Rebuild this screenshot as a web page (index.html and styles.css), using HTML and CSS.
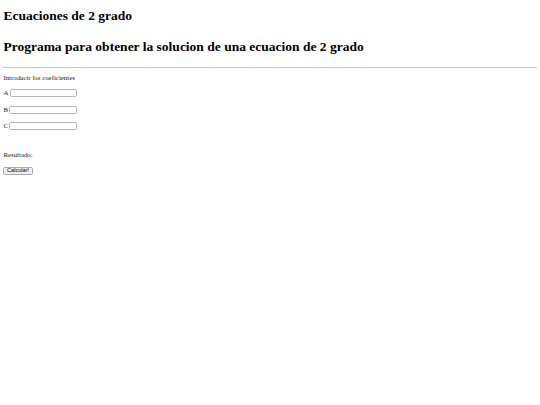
FILE: index.html
```html
<!DOCTYPE html>
<html lang="es">
<head>
<meta charset="utf-8">
<title>Ecuaciones de 2 grado</title>
<link rel="stylesheet" href="styles.css">
</head>
<body>
<div class="page">
  <h1 class="title">Ecuaciones de 2 grado</h1>
  <h1 class="title subtitle">Programa para obtener la solucion de una ecuacion de 2 grado</h1>
  <hr class="rule">
  <p class="intro">Introducir los coeficientes</p>
  <div class="row"><label class="lbl" for="a">A</label><input class="field" id="a" type="text"></div>
  <div class="row"><label class="lbl" for="b">B</label><input class="field" id="b" type="text"></div>
  <div class="row"><label class="lbl" for="c">C</label><input class="field" id="c" type="text"></div>
  <p class="result">Resultado:</p>
  <div class="actions"><button class="btn" type="button">Calcular!</button></div>
</div>
</body>
</html>
```

FILE: styles.css
```css
html, body {
  margin: 0;
  padding: 0;
  background: #ffffff;
}

.page {
  display: flex;
  flex-direction: column;
  align-items: stretch;
  padding: 8.2px 3.4px 0 3.4px;
  font-family: "Liberation Serif", "Times New Roman", serif;
  font-size: 6.85px;
  color: #1a1a1a;
}

.title {
  margin: 0;
  font-size: 13.5px;
  line-height: 15.5px;
  font-weight: bold;
  color: #000000;
}

.subtitle {
  margin-top: 15px;
}

.rule {
  margin: 13px 0 0 0;
  border: 0;
  border-top: 1px solid #c4c4c4;
  height: 0;
}

.intro {
  margin: 5.8px 0 0 0;
  line-height: 7.8px;
}

.row {
  display: flex;
  align-items: center;
  gap: 1.2px;
  height: 8px;
  margin-top: 7.6px;
}

.row + .row {
  margin-top: 8.2px;
}

.lbl {
  line-height: 7.8px;
}

.field {
  box-sizing: border-box;
  width: 67.5px;
  height: 8px;
  margin: 0;
  padding: 0;
  border: 1px solid #b4b4b4;
  border-radius: 1.6px;
  background: #ffffff;
}

.result {
  margin: 21px 0 0 0;
  line-height: 7.8px;
}

.actions {
  display: flex;
  margin-top: 8.4px;
}

.btn {
  box-sizing: border-box;
  height: 7.8px;
  margin: 0;
  padding: 0 2.6px;
  font-family: "Liberation Sans", Arial, sans-serif;
  font-size: 5.6px;
  line-height: 5.6px;
  color: #000000;
  background: #efefef;
  border: 1px solid #a8a8a8;
  border-radius: 1.6px;
}
```
